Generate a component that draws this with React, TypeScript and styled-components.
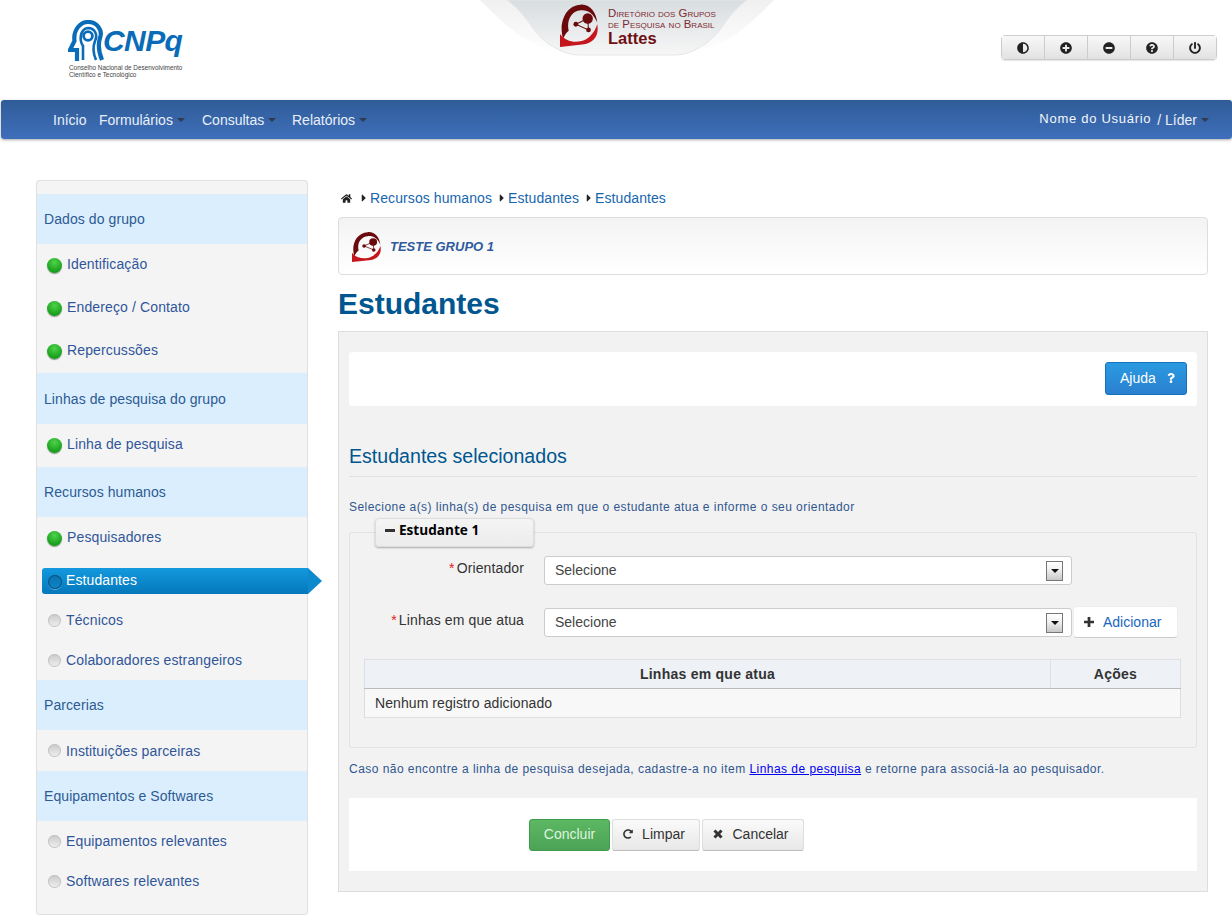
import React from "react";
import styled, { createGlobalStyle } from "styled-components";
import {
  FaAdjust,
  FaCaretRight,
  FaHome,
  FaMinusCircle,
  FaPlusCircle,
  FaPowerOff,
  FaQuestion,
  FaQuestionCircle,
  FaRedoAlt,
} from "react-icons/fa";

const GlobalStyle = createGlobalStyle`
  html, body {
    margin: 0;
    padding: 0;
    background: #fff;
    font-family: "Liberation Sans", Arial, sans-serif;
    font-size: 14px;
    color: #333;
  }
  * { box-sizing: border-box; }
`;

const StyledHeader = styled.header`
  display: grid;
  grid-template-columns: 480px 294px 1fr;
  height: 100px;
`;
const StyledLogo = styled.div`
  padding: 20px 0 0 68px;
`;
const StyledLogoTop = styled.div`
  display: flex;
  align-items: center;
  height: 41px;
`;
const StyledLogoName = styled.span`
  margin: 0 0 0 -1px;
  font-size: 30px;
  font-weight: bold;
  font-style: italic;
  letter-spacing: -0.6px;
  color: #0a6cb8;
`;
const StyledLogoCaption = styled.div`
  margin: 3px 0 0 1px;
  font-size: 6.4px;
  line-height: 7px;
  color: #444;
`;
const StyledTab = styled.div`
  position: relative;
  height: 60px;
`;
const StyledTabText = styled.div`
  position: absolute;
  left: 128px;
  top: 8px;
  color: #7d2a30;
  font-size: 11.4px;
  line-height: 11px;
  font-variant: small-caps;
  white-space: nowrap;
`;
const StyledTabTitle = styled.div`
  margin-top: 1px;
  font-variant: normal;
  font-size: 16.5px;
  line-height: 15px;
  font-weight: bold;
  color: #6e0f14;
`;
const StyledTabEmblem = styled.div`
  position: absolute;
  left: 80px;
  top: 3px;
`;
const StyledTools = styled.div`
  justify-self: end;
  display: flex;
  height: 25px;
  margin: 35px 15px 0 0;
  border: 1px solid #ccc;
  border-radius: 4px;
  box-shadow: 0 1px 1px rgba(0, 0, 0, 0.1);
`;
const StyledToolButton = styled.div`
  display: flex;
  align-items: center;
  justify-content: center;
  width: 43px;
  font-size: 12px;
  color: #222;
  background: linear-gradient(#f8f8f8, #e2e2e2);
  &:first-child { width: 42px; }
  & + & { border-left: 1px solid #ccc; }
`;

const StyledNav = styled.nav`
  display: flex;
  align-items: center;
  justify-content: space-between;
  height: 39px;
  margin-left: 1px;
  padding: 0 23px 0 52px;
  border-radius: 3px;
  background: linear-gradient(#2f5c97, #3f6fbb);
  box-shadow: 0 1px 3px rgba(0, 0, 0, 0.35);
  color: #e9eff9;
`;
const StyledNavList = styled.div`
  display: flex;
  align-items: center;
`;
const StyledNavItem = styled.span<{ $width: number }>`
  display: flex;
  align-items: center;
  width: ${(p) => p.$width}px;
`;
const StyledCaret = styled.i`
  width: 0;
  height: 0;
  margin: 1px 0 0 4px;
  border: 4px solid transparent;
  border-bottom: 0;
  border-top-color: #2f3a50;
`;
const StyledUser = styled.div`
  display: flex;
  align-items: center;
`;
const StyledUserName = styled.span`
  margin: -3px 6px 0 0;
  font-size: 13px;
  letter-spacing: 0.72px;
  color: #f4f7fc;
`;

const StyledBody = styled.div`
  display: grid;
  grid-template-columns: 272px 870px;
  gap: 30px;
  padding: 41px 0 6px 36px;
`;
const StyledSidebar = styled.aside`
  padding: 13px 0 13px;
  background: #f4f4f4;
  border: 1px solid #e0e0e0;
  border-radius: 3px;
`;
const StyledSection = styled.div<{ $height: number }>`
  display: flex;
  align-items: center;
  height: ${(p) => p.$height}px;
  padding-left: 7px;
  background: #dbeefe;
  color: #2c5b93;
  letter-spacing: 0.08px;
`;
const StyledItem = styled.div<{ $height: number; $state: "done" | "todo" }>`
  display: flex;
  align-items: center;
  gap: 5px;
  height: ${(p) => p.$height}px;
  padding: 0 0 ${(p) => (p.$state === "done" ? 4 : 0)}px 10px;
  color: #30569a;
  letter-spacing: 0.13px;
`;
const StyledActiveItem = styled.div`
  position: relative;
  display: flex;
  align-items: center;
  gap: 4px;
  height: 26px;
  margin: 8px -1px 6px 5px;
  padding: 0 0 2px 6px;
  border-radius: 3px 0 0 3px;
  color: #fff;
  letter-spacing: 0.1px;
  background: linear-gradient(#1499de, #0478bb);
  &::after {
    content: "";
    position: absolute;
    left: 100%;
    top: 0;
    border-left: 14px solid #0d8acd;
    border-top: 13px solid transparent;
    border-bottom: 13px solid transparent;
  }
`;
const StyledDot = styled.i<{ $state: "done" | "todo" | "current" }>`
  flex: none;
  width: ${(p) => (p.$state === "done" ? 15 : p.$state === "todo" ? 13 : 14)}px;
  height: ${(p) => (p.$state === "done" ? 15 : p.$state === "todo" ? 13 : 14)}px;
  margin: ${(p) => (p.$state === "done" ? "4px 0 0" : p.$state === "todo" ? "0 0 0 1px" : "4px 0 0")};
  border-radius: 50%;
  background: ${(p) =>
    p.$state === "done"
      ? "radial-gradient(circle at 50% 30%, #4fd24a, #18a01c 70%, #128016)"
      : p.$state === "todo"
        ? "linear-gradient(#c9c9c9, #f0f0f0)"
        : "linear-gradient(#0a72b2, #0d86c8)"};
  box-shadow: ${(p) =>
    p.$state === "done"
      ? "0 1px 1px rgba(0,0,0,0.4)"
      : p.$state === "todo"
        ? "inset 0 0 0 1px #c4c4c4"
        : "inset 0 0 0 1px #0b527f, 0 1px 0 #58aedd"};
`;

const StyledMain = styled.main`
  display: flex;
  flex-direction: column;
`;
const StyledCrumbs = styled.div`
  display: flex;
  align-items: center;
  height: 36px;
  margin-bottom: 1px;
  padding-left: 3px;
  color: #1766ae;
  letter-spacing: 0.09px;
`;
const StyledCrumbArrow = styled.span`
  display: flex;
  width: 16px;
  padding-left: 4px;
  color: #222;
  font-size: 12px;
`;
const StyledHomeIcon = styled.span`
  display: flex;
  width: 13px;
  color: #222;
  font-size: 11px;
`;
const StyledGroupBox = styled.div`
  display: flex;
  align-items: center;
  gap: 9px;
  height: 58px;
  padding: 0 0 0 13px;
  border: 1px solid #ddd;
  border-radius: 4px;
  background: linear-gradient(#f3f3f3, #fff);
  font-size: 13px;
  font-weight: bold;
  font-style: italic;
  color: #2f5a9e;
`;
const StyledTitle = styled.h1`
  height: 56px;
  margin: 0;
  font-size: 30px;
  line-height: 57px;
  font-weight: bold;
  color: #00568f;
`;
const StyledPanel = styled.section`
  height: 561px;
  padding: 20px 10px;
  background: #f2f2f2;
  border: 1px solid #ddd;
`;
const StyledBar = styled.div`
  display: flex;
  justify-content: flex-end;
  height: 54px;
  padding: 10px;
  background: #fff;
  border-radius: 3px;
`;
const StyledHelpButton = styled.div`
  display: flex;
  align-items: center;
  gap: 10px;
  width: 82px;
  height: 33px;
  padding: 0 0 2px 14px;
  border: 1px solid #1670bb;
  border-radius: 3px;
  color: #fff;
  background: linear-gradient(#2a9ae0, #2a80d0);
`;
const StyledHelpIcon = styled.span`
  display: flex;
  font-size: 10px;
`;
const StyledSubtitle = styled.h3`
  height: 71px;
  margin: 0;
  padding-top: 39px;
  border-bottom: 1px solid #e0e0e0;
  font-size: 19.6px;
  line-height: 22px;
  font-weight: normal;
  color: #00568f;
`;
const StyledHint = styled.p`
  height: 55px;
  margin: 0;
  padding-top: 23px;
  font-size: 12px;
  line-height: 15px;
  letter-spacing: 0.45px;
  color: #30568f;
`;
const StyledFieldset = styled.div`
  position: relative;
  height: 216px;
  padding: 23px 14px 0;
  border: 1px solid #e3e3e3;
  border-radius: 3px;
`;
const StyledLegend = styled.div`
  position: absolute;
  left: 25px;
  top: -15px;
  display: flex;
  align-items: center;
  gap: 4px;
  width: 159px;
  height: 29px;
  padding: 0 0 6px 9px;
  border: 1px solid #ddd;
  border-radius: 4px;
  background: linear-gradient(#f4f4f4, #ececec);
  box-shadow: 0 1px 2px rgba(0, 0, 0, 0.3);
  font-family: "Open Sans", sans-serif;
  font-size: 13.6px;
  font-weight: bold;
  color: #000;
`;
const StyledLegendBar = styled.i`
  width: 10px;
  height: 3px;
  margin-top: 2px;
  background: #333;
`;
const StyledRow = styled.div`
  display: flex;
  align-items: center;
  height: 29px;
  margin-bottom: 23px;
`;
const StyledLabel = styled.label`
  width: 160px;
  padding: 0 0 5px;
  margin-right: 20px;
  text-align: right;
  color: #333;
  letter-spacing: 0.12px;
`;
const StyledRequired = styled.span`
  margin-right: 2px;
  color: #e01b1b;
`;
const StyledSelect = styled.div`
  display: flex;
  align-items: center;
  justify-content: space-between;
  width: 528px;
  height: 29px;
  padding: 0 8px 0 10px;
  border: 1px solid #ccc;
  border-radius: 3px;
  background: #fff;
  color: #444;
  line-height: 13px;
`;
const StyledSelectArrow = styled.span`
  display: flex;
  justify-content: center;
  width: 17px;
  height: 20px;
  padding-top: 7px;
  border: 1px solid #777;
  background: linear-gradient(#fff, #f2f2f2 40%, #c8c8c8);
  &::before {
    content: "";
    width: 0;
    height: 0;
    border: 4px solid transparent;
    border-bottom: 0;
    border-top-color: #111;
  }
`;
const StyledAddButton = styled.div`
  display: flex;
  align-items: center;
  gap: 9px;
  flex: none;
  width: 105px;
  height: 32px;
  margin: -1px 0 0 1px;
  padding: 0 0 0 10px;
  border: 1px solid #eee;
  border-bottom-color: #ccc;
  border-radius: 4px;
  background: #fff;
  color: #1766c0;
`;
const StyledTable = styled.table`
  width: 817px;
  margin-top: -1px;
  border-collapse: collapse;
  table-layout: fixed;
`;
const StyledHeadCell = styled.th<{ $width?: number }>`
  width: ${(p) => (p.$width ? `${p.$width}px` : "auto")};
  height: 29px;
  padding: 0;
  background: #eef1f6;
  border: 1px solid #dcdfe3;
  border-bottom: 1px solid #bbb;
  color: #333;
  text-align: center;
  letter-spacing: 0.25px;
`;
const StyledCell = styled.td`
  height: 29px;
  padding: 0 10px;
  background: #f8f8f8;
  border: 1px solid #ddd;
  color: #333;
  letter-spacing: 0.08px;
`;
const StyledNote = styled.p`
  height: 50px;
  margin: 0;
  padding-top: 14px;
  font-size: 12px;
  line-height: 15px;
  letter-spacing: 0.46px;
  color: #30568f;
`;
const StyledLink = styled.a`
  color: #0000ee;
  text-decoration: underline;
`;
const StyledActions = styled.div`
  display: flex;
  gap: 2px;
  height: 73px;
  padding: 21px 0 0 180px;
  background: #fff;
`;
const StyledButton = styled.div<{ $width: number; $primary?: boolean }>`
  display: flex;
  align-items: center;
  justify-content: center;
  gap: 9px;
  width: ${(p) => p.$width}px;
  height: 32px;
  padding: 0 ${(p) => (p.$primary ? 0 : 4)}px 2px 0;
  border: 1px solid ${(p) => (p.$primary ? "#3f9a4c" : "#ddd")};
  border-bottom-color: ${(p) => (p.$primary ? "#3f9a4c" : "#bbb")};
  border-radius: 3px;
  background: ${(p) =>
    p.$primary ? "linear-gradient(#5cb863, #4ca356)" : "linear-gradient(#fafafa, #e8e8e8)"};
  color: ${(p) => (p.$primary ? "#dff3df" : "#333")};
`;
const StyledButtonIcon = styled.span`
  display: flex;
  font-size: 10px;
  color: #333;
`;

// Spiral mark of the Lattes logo
const LattesMark = ({ width, height }: { width: number; height: number }) => (
  <svg width={width} height={height} viewBox="0 0 48 54" preserveAspectRatio="none">
    <path
      d="M4 44 C-2 26 6 3 26 2 C38 1 46 12 47 24 C42 12 34 8 26 9 C14 10 8 22 11 34 C8 36 6 39 4 44 Z"
      fill="#6b0a0d"
    />
    <path
      d="M0 38 C6 46 16 49 26 47 C36 45 44 36 47 26 C50 40 42 50 28 51 L0 54 Z"
      fill="#c4161c"
    />
    <circle cx="35" cy="19" r="6.5" fill="#6b0a0d" />
    <circle cx="20" cy="26" r="3" fill="#6b0a0d" />
    <circle cx="36" cy="33" r="3" fill="#6b0a0d" />
    <path d="M35 19 L20 26 L36 33 Z" fill="none" stroke="#6b0a0d" strokeWidth="1.3" />
  </svg>
);

// Head silhouette of the CNPq logo
const CnpqHead = () => (
  <svg width="36" height="41" viewBox="0 0 36 41" fill="none" stroke="#0a6cb8">
    <path
      d="M9 41 V30 H2 L6.5 21 C5 9 13 2 20 2 C29 2 35 10 32 18 C30 24 30 30 34 40"
      strokeWidth="4.2"
    />
    <path d="M15 40 V26 C11 20 12 9 20 8 C27 8 30 15 27 21 C25 26 25 33 28 40" strokeWidth="2.6" />
    <circle cx="20" cy="16" r="4.4" strokeWidth="2.8" />
  </svg>
);

const TabShape = () => (
  <svg width="294" height="60" viewBox="0 0 294 60">
    <defs>
      <linearGradient id="tabFill" x1="0" y1="0" x2="0" y2="1">
        <stop offset="0" stopColor="#d8dde0" />
        <stop offset="1" stopColor="#f6f6f6" />
      </linearGradient>
      <linearGradient id="tabGlow" x1="0" y1="0" x2="0" y2="1">
        <stop offset="0" stopColor="#f0f0f0" />
        <stop offset="1" stopColor="#ffffff" />
      </linearGradient>
    </defs>
    <path d="M0 0 C30 30 50 50 100 56 H194 C244 50 264 30 294 0 Z" fill="url(#tabGlow)" />
    <path
      d="M27 0 C38 8 44 16 50 24 C58 36 66 43 74 47 C82 52 90 55 100 55 H194 C204 55 212 52 220 47 C228 43 236 36 244 24 C250 16 256 8 267 0 Z"
      fill="url(#tabFill)"
      stroke="#e6e6e6"
    />
  </svg>
);

// Heavy glyphs of the old icon font, thicker than the package versions
const PlusGlyph = () => (
  <svg width="10" height="10" viewBox="0 0 11 11" fill="#333">
    <path d="M4 0 H7 V4 H11 V7 H7 V11 H4 V7 H0 V4 H4 Z" />
  </svg>
);
const CrossGlyph = () => (
  <svg width="10" height="10" viewBox="0 0 12 12" fill="#333">
    <path d="M0.5 3 L3 0.5 L6 3.5 L9 0.5 L11.5 3 L8.5 6 L11.5 9 L9 11.5 L6 8.5 L3 11.5 L0.5 9 L3.5 6 Z" />
  </svg>
);

const Header = () => (
  <StyledHeader>
    <StyledLogo>
      <StyledLogoTop>
        <CnpqHead />
        <StyledLogoName>CNPq</StyledLogoName>
      </StyledLogoTop>
      <StyledLogoCaption>
        Conselho Nacional de Desenvolvimento
        <br />
        Científico e Tecnológico
      </StyledLogoCaption>
    </StyledLogo>
    <StyledTab>
      <TabShape />
      <StyledTabEmblem>
        <LattesMark width={38} height={44} />
      </StyledTabEmblem>
      <StyledTabText>
        Diretório dos Grupos
        <br />
        de Pesquisa no Brasil
        <StyledTabTitle>Lattes</StyledTabTitle>
      </StyledTabText>
    </StyledTab>
    <StyledTools>
      <StyledToolButton><FaAdjust /></StyledToolButton>
      <StyledToolButton><FaPlusCircle /></StyledToolButton>
      <StyledToolButton><FaMinusCircle /></StyledToolButton>
      <StyledToolButton><FaQuestionCircle /></StyledToolButton>
      <StyledToolButton><FaPowerOff /></StyledToolButton>
    </StyledTools>
  </StyledHeader>
);

const Nav = () => (
  <StyledNav>
    <StyledNavList>
      <StyledNavItem $width={46}>Início</StyledNavItem>
      <StyledNavItem $width={103}>Formulários<StyledCaret /></StyledNavItem>
      <StyledNavItem $width={90}>Consultas<StyledCaret /></StyledNavItem>
      <StyledNavItem $width={90}>Relatórios<StyledCaret /></StyledNavItem>
    </StyledNavList>
    <StyledUser>
      <StyledUserName>Nome do Usuário</StyledUserName>
      / Líder<StyledCaret />
    </StyledUser>
  </StyledNav>
);

type DotState = "done" | "todo";
type SideEntry =
  | { kind: "section"; label: string; height: number }
  | { kind: "item"; label: string; height: number; state: DotState }
  | { kind: "active"; label: string };

const sideEntries: SideEntry[] = [
  { kind: "section", label: "Dados do grupo", height: 50 },
  { kind: "item", label: "Identificação", height: 43, state: "done" },
  { kind: "item", label: "Endereço / Contato", height: 43, state: "done" },
  { kind: "item", label: "Repercussões", height: 43, state: "done" },
  { kind: "section", label: "Linhas de pesquisa do grupo", height: 51 },
  { kind: "item", label: "Linha de pesquisa", height: 43, state: "done" },
  { kind: "section", label: "Recursos humanos", height: 50 },
  { kind: "item", label: "Pesquisadores", height: 43, state: "done" },
  { kind: "active", label: "Estudantes" },
  { kind: "item", label: "Técnicos", height: 40, state: "todo" },
  { kind: "item", label: "Colaboradores estrangeiros", height: 40, state: "todo" },
  { kind: "section", label: "Parcerias", height: 50 },
  { kind: "item", label: "Instituições parceiras", height: 41, state: "todo" },
  { kind: "section", label: "Equipamentos e Softwares", height: 50 },
  { kind: "item", label: "Equipamentos relevantes", height: 40, state: "todo" },
  { kind: "item", label: "Softwares relevantes", height: 40, state: "todo" },
];

const Sidebar = () => (
  <StyledSidebar>
    {sideEntries.map((entry) => {
      if (entry.kind === "section") {
        return <StyledSection key={entry.label} $height={entry.height}>{entry.label}</StyledSection>;
      }
      if (entry.kind === "active") {
        return (
          <StyledActiveItem key={entry.label}>
            <StyledDot $state="current" />
            {entry.label}
          </StyledActiveItem>
        );
      }
      return (
        <StyledItem key={entry.label} $height={entry.height} $state={entry.state}>
          <StyledDot $state={entry.state} />
          {entry.label}
        </StyledItem>
      );
    })}
  </StyledSidebar>
);

const crumbs = ["Recursos humanos", "Estudantes", "Estudantes"];

export default function App() {
  return (
    <>
      <GlobalStyle />
      <Header />
      <Nav />
      <StyledBody>
        <Sidebar />
        <StyledMain>
          <StyledCrumbs>
            <StyledHomeIcon><FaHome /></StyledHomeIcon>
            {crumbs.map((crumb, i) => (
              <React.Fragment key={i}>
                <StyledCrumbArrow><FaCaretRight /></StyledCrumbArrow>
                {crumb}
              </React.Fragment>
            ))}
          </StyledCrumbs>
          <StyledGroupBox>
            <LattesMark width={29} height={31} />
            TESTE GRUPO 1
          </StyledGroupBox>
          <StyledTitle>Estudantes</StyledTitle>
          <StyledPanel>
            <StyledBar>
              <StyledHelpButton>
                Ajuda
                <StyledHelpIcon><FaQuestion /></StyledHelpIcon>
              </StyledHelpButton>
            </StyledBar>
            <StyledSubtitle>Estudantes selecionados</StyledSubtitle>
            <StyledHint>Selecione a(s) linha(s) de pesquisa em que o estudante atua e informe o seu orientador</StyledHint>
            <StyledFieldset>
              <StyledLegend>
                <StyledLegendBar />
                Estudante 1
              </StyledLegend>
              <StyledRow>
                <StyledLabel><StyledRequired>*</StyledRequired>Orientador</StyledLabel>
                <StyledSelect>Selecione<StyledSelectArrow /></StyledSelect>
              </StyledRow>
              <StyledRow>
                <StyledLabel><StyledRequired>*</StyledRequired>Linhas em que atua</StyledLabel>
                <StyledSelect>Selecione<StyledSelectArrow /></StyledSelect>
                <StyledAddButton>
                  <PlusGlyph />
                  Adicionar
                </StyledAddButton>
              </StyledRow>
              <StyledTable>
                <thead>
                  <tr>
                    <StyledHeadCell>Linhas em que atua</StyledHeadCell>
                    <StyledHeadCell $width={130}>Ações</StyledHeadCell>
                  </tr>
                </thead>
                <tbody>
                  <tr>
                    <StyledCell colSpan={2}>Nenhum registro adicionado</StyledCell>
                  </tr>
                </tbody>
              </StyledTable>
            </StyledFieldset>
            <StyledNote>
              Caso não encontre a linha de pesquisa desejada, cadastre-a no item{" "}
              <StyledLink>Linhas de pesquisa</StyledLink> e retorne para associá-la ao pesquisador.
            </StyledNote>
            <StyledActions>
              <StyledButton $width={81} $primary>Concluir</StyledButton>
              <StyledButton $width={88}>
                <StyledButtonIcon><FaRedoAlt /></StyledButtonIcon>
                Limpar
              </StyledButton>
              <StyledButton $width={102}>
                <CrossGlyph />
                Cancelar
              </StyledButton>
            </StyledActions>
          </StyledPanel>
        </StyledMain>
      </StyledBody>
    </>
  );
}
